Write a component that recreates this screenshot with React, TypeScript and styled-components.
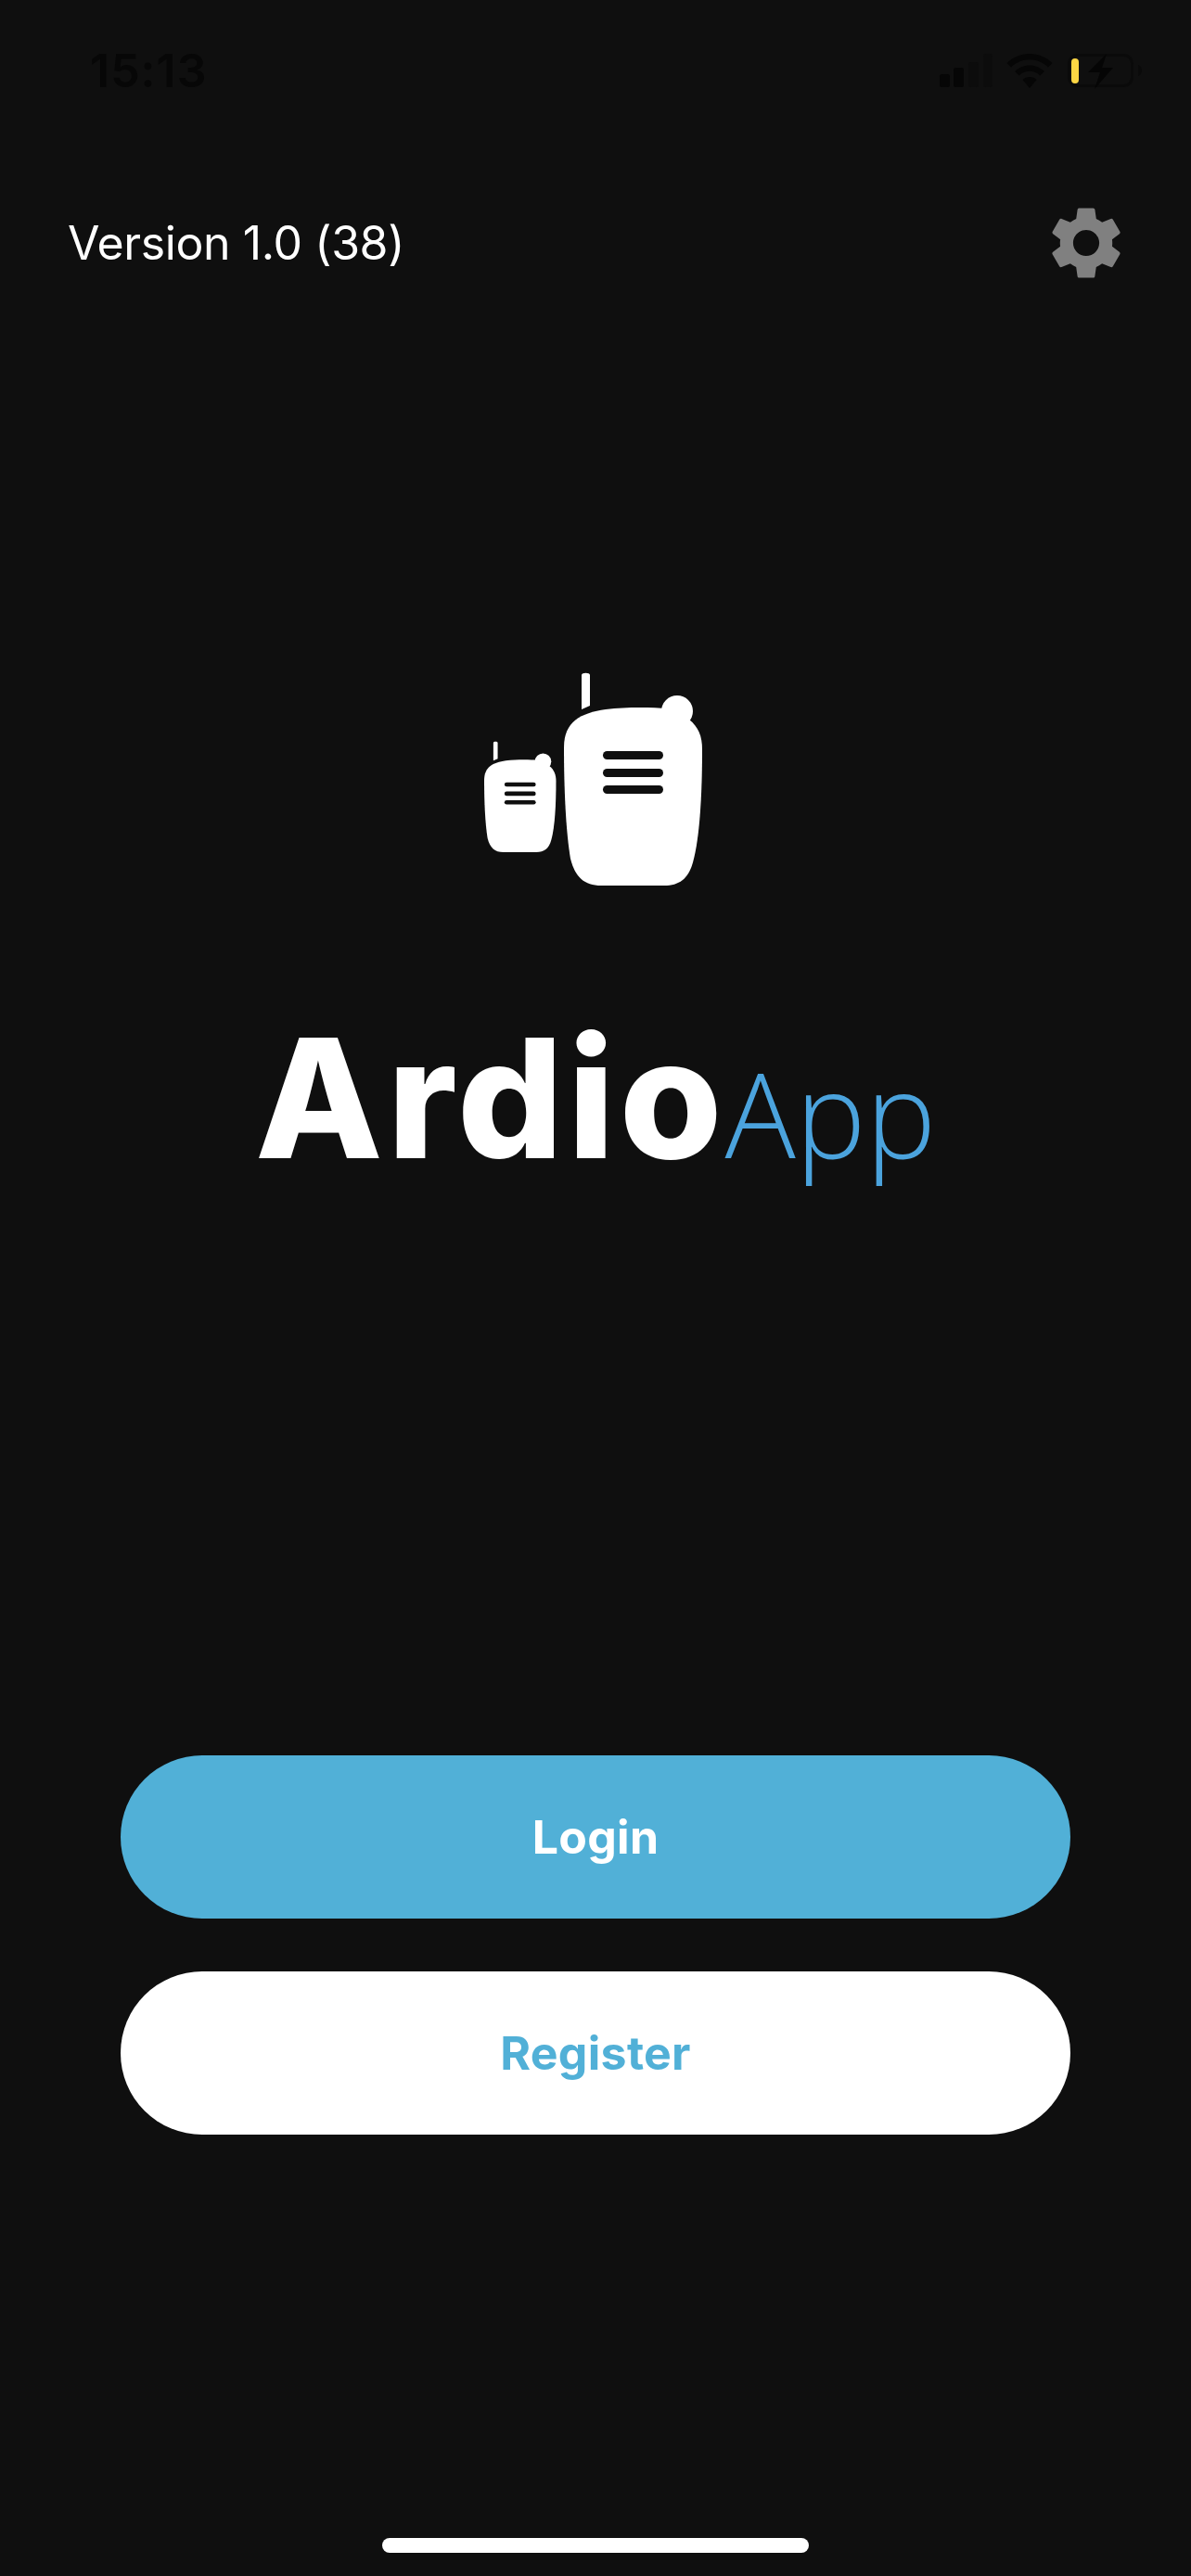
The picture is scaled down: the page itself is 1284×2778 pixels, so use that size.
import React from 'react';
import styled, {createGlobalStyle} from 'styled-components';
import {MdSettings} from 'react-icons/md';

const GlobalStyle = createGlobalStyle`
  html, body {
    margin: 0;
    padding: 0;
    background: #0f0f0f;
  }
`;

const Page = styled.div`
  width: 1284px;
  height: 2778px;
  display: flex;
  flex-direction: column;
  background: #0f0f0f;
  font-family: 'Inter', 'Liberation Sans', sans-serif;
  overflow: hidden;
`;

const StatusBar = styled.div`
  height: 212px;
  flex: none;
  display: flex;
  justify-content: space-between;
  align-items: flex-start;
  padding: 46px 52px 0 97px;
  box-sizing: border-box;
`;

const Clock = styled.div`
  font-size: 50px;
  line-height: 60px;
  font-weight: 600;
  letter-spacing: 1px;
  color: #070707;
`;

const StatusIcons = styled.div`
  display: flex;
  align-items: flex-start;
  gap: 15px;
  padding-top: 12px;
`;

const Header = styled.div`
  flex: none;
  height: 100px;
  display: flex;
  justify-content: space-between;
  align-items: center;
  padding: 0 66px 0 73px;
`;

const Version = styled.div`
  font-size: 50px;
  font-weight: 400;
  letter-spacing: -0.4px;
  color: #fff;
`;

const SettingsIcon = styled(MdSettings)`
  display: block;
  width: 94px;
  height: 94px;
  color: #808080;
`;

const Brand = styled.div`
  flex: none;
  display: flex;
  flex-direction: column;
  align-items: center;
  padding-top: 388px;
`;

const LogoMark = styled.svg`
  display: block;
  width: 320px;
  height: 270px;
`;

const Wordmark = styled.div`
  display: flex;
  align-items: baseline;
  margin-top: 125px;
  line-height: 1;
`;

const Ardio = styled.span`
  font-family: 'Inter', 'Liberation Sans', sans-serif;
  font-size: 179px;
  font-weight: 800;
  letter-spacing: 5px;
  color: #fff;
`;

const AppName = styled.span`
  font-family: 'Open Sans', sans-serif;
  font-size: 127px;
  font-weight: 300;
  margin-left: -2px;
  color: #4ba3dd;
`;

const Actions = styled.div`
  flex: none;
  display: flex;
  flex-direction: column;
  gap: 57px;
  padding: 0 130px;
  margin-top: 619px;
`;

const PillButton = styled.button<{$primary?: boolean}>`
  height: 176px;
  border: none;
  border-radius: 88px;
  font-family: 'Inter', sans-serif;
  font-size: 50px;
  font-weight: 700;
  letter-spacing: 0.3px;
  background: ${({$primary}) => ($primary ? '#51b0d7' : '#fff')};
  color: ${({$primary}) => ($primary ? '#fff' : '#51b0d7')};
`;

const HomeIndicator = styled.div`
  width: 460px;
  height: 16px;
  border-radius: 8px;
  background: #fff;
  margin: auto auto 25px;
`;

const SignalIcon = () => (
  <svg width="57" height="38" viewBox="0 0 57 38">
    <rect x="0" y="22" width="11" height="14" rx="2.500" fill="#060606" />
    <rect x="15" y="15" width="11" height="21" rx="2.500" fill="#060606" />
    <rect x="31" y="9" width="11" height="27" rx="2.500" fill="#0c0c0c" />
    <rect x="47" y="0" width="10" height="36" rx="2.500" fill="#0c0c0c" />
  </svg>
);

const WifiIcon = () => (
  <svg width="50" height="38" viewBox="0 0 50 38">
    <path d="M25 0C15.500 0 7 3.700 0.500 10L5 14.500C10.300 9.300 17.300 6.200 25 6.200S39.700 9.300 45 14.500L49.500 10C43 3.700 34.500 0 25 0Z" fill="#060606" />
    <path d="M25 12.500C18.800 12.500 13.300 14.900 9.200 19L13.600 23.400C16.600 20.500 20.600 18.700 25 18.700S33.400 20.500 36.400 23.400L40.800 19C36.700 14.900 31.200 12.500 25 12.500Z" fill="#060606" />
    <path d="M25 25C22 25 19.500 26.100 17.500 27.900L25 37L32.500 27.900C30.500 26.100 28 25 25 25Z" fill="#060606" />
  </svg>
);

const BatteryIcon = () => (
  <svg width="82" height="40" viewBox="0 0 82 40">
    <rect x="2.500" y="1.500" width="68" height="33" rx="9" fill="none" stroke="#0a0a0a" strokeWidth="3" />
    <path d="M77 12c3 1.500 4 4 4 6s-1 4.500-4 6z" fill="#0a0a0a" />
    <rect x="5" y="5" width="8" height="27" rx="4" fill="#fdd644" />
    <path d="M43 0L23 20H36L30 38L50 15H38Z" fill="#050505" />
  </svg>
);

// walkie talkie: body, antenna, knob and three speaker slots
const Walkie = ({x, y, s}: {x: number; y: number; s: number}) => (
  <g transform={`translate(${x} ${y}) scale(${s})`}>
    <path d="M19 2c0-3 9-3 9 0v33l-9 4z" fill="#fff" />
    <circle cx="122" cy="41" r="17" fill="#fff" />
    <path
      d="M0 80C0 52 18 43 45 39C70 36 95 37 112 38L135 50C145 58 149 68 149 82C149 125 147 175 139 204C134 222 124 229 108 229H40C22 229 12 220 7 200C2 170 0 125 0 80Z"
      fill="#fff"
    />
    <rect x="42" y="84" width="65" height="9" rx="4.500" fill="#0f0f0f" />
    <rect x="42" y="103" width="65" height="9" rx="4.500" fill="#0f0f0f" />
    <rect x="42" y="121" width="65" height="9" rx="4.500" fill="#0f0f0f" />
  </g>
);

const Logo = () => (
  <LogoMark viewBox="0 0 320 270">
    <Walkie x={126} y={26} s={1} />
    <Walkie x={40} y={100} s={0.52} />
  </LogoMark>
);

export default function App() {
  return (
    <Page>
      <GlobalStyle />
      <StatusBar>
        <Clock>15:13</Clock>
        <StatusIcons>
          <SignalIcon />
          <WifiIcon />
          <BatteryIcon />
        </StatusIcons>
      </StatusBar>
      <Header>
        <Version>Version 1.0 (38)</Version>
        <SettingsIcon />
      </Header>
      <Brand>
        <Logo />
        <Wordmark>
          <Ardio>Ardio</Ardio>
          <AppName>App</AppName>
        </Wordmark>
      </Brand>
      <Actions>
        <PillButton $primary>Login</PillButton>
        <PillButton>Register</PillButton>
      </Actions>
      <HomeIndicator />
    </Page>
  );
}
